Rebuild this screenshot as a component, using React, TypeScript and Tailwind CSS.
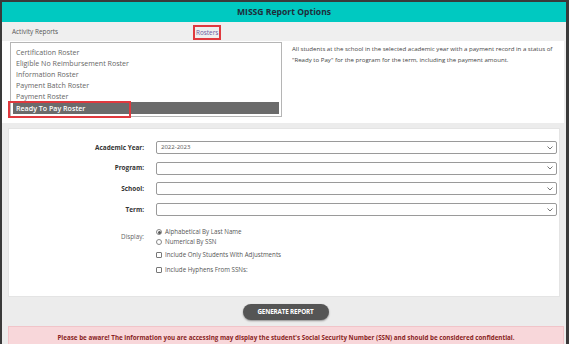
const rosters = [
  "Certification Roster",
  "Eligible No Reimbursement Roster",
  "Information Roster",
  "Payment Batch Roster",
  "Payment Roster",
  "Ready To Pay Roster",
];

const fields = [
  { label: "Academic Year:", value: "2022-2023" },
  { label: "Program:", value: "" },
  { label: "School:", value: "" },
  { label: "Term:", value: "" },
];

function Chevron() {
  return (
    <svg width="6" height="4" viewBox="0 0 6 4" className="shrink-0">
      <path d="M0.5 0.5 L3 3 L5.5 0.5" fill="none" stroke="#777" strokeWidth="1" />
    </svg>
  );
}

export default function App() {
  return (
    <div
      className="h-[344px] w-[569px] overflow-hidden border-l-2 border-r-[3px] border-t-2 border-[#3a3a3a] bg-[#ececec] text-[#555]"
      style={{ fontFamily: '"Open Sans", "Noto Sans", sans-serif' }}
    >
      {/* header */}
      <div className="flex h-[20px] items-center justify-center bg-[#00c9c1] text-[8.6px] font-bold text-[#1f2d3a]">
        MISSG Report Options
      </div>

      {/* tabs */}
      <div className="relative flex h-[19px] items-center bg-[#efefef] text-[6.4px] text-[#555]">
        <span className="pl-[10px]">Activity Reports</span>
        <span className="absolute left-[191px] top-[3px] border-2 border-[#e0393e] px-[1px] leading-[11px] text-[#6d5a9e]">
          Rosters
        </span>
      </div>

      {/* roster list + description */}
      <div className="mr-[2px] flex h-[82px] bg-white pl-[8px] pt-[1px]">
        <div className="relative h-[75px] w-[272px] border border-[#b5b5b5] pt-[4px] pl-[2px] pr-[2px]">
          {rosters.map((r, i) => (
            <div
              key={r}
              className={
                i === rosters.length - 1
                  ? "h-[12px] bg-[#6b6b6b] pl-[3px] text-[7.1px] font-semibold leading-[12px] text-white"
                  : "h-[11px] pl-[3px] text-[7.1px] leading-[11px] text-[#666]"
              }
            >
              {r}
            </div>
          ))}
          <div className="absolute left-[-3px] top-[58px] h-[17px] w-[123px] border-2 border-[#e0393e]" />
        </div>
        <p className="w-[282px] pl-[10px] pt-[1px] text-[6.1px] leading-[11px] text-[#444]">
          All students at the school in the selected academic year with a payment record in a status of
          "Ready to Pay" for the program for the term, including the payment amount.
        </p>
      </div>

      {/* form card */}
      <div className="mx-[6px] mt-[5px] h-[169px] border border-[#e4e4e4] bg-white pt-[12px]">
        {fields.map((f) => (
          <div key={f.label} className="mb-[7.7px] flex items-center">
            <div className="w-[135px] text-right text-[6.4px] font-bold text-[#333]">{f.label}</div>
            <div className="ml-[12px] flex h-[13px] w-[401px] items-center justify-between rounded-[2px] border border-[#9a9a9a] pl-[4px] pr-[3px] text-[6px] text-[#555]">
              <span>{f.value}</span>
              <Chevron />
            </div>
          </div>
        ))}

        <div className="mt-[11px] flex">
          <div className="w-[135px] pt-[5px] text-right text-[6.3px] text-[#666]">Display:</div>
          <div className="ml-[12px] text-[6.2px] text-[#555]">
            <div className="flex h-[10px] items-center gap-[3px]">
              <span className="flex h-[6px] w-[6px] items-center justify-center rounded-full border border-[#888]">
                <span className="h-[3px] w-[3px] rounded-full bg-[#555]" />
              </span>
              Alphabetical By Last Name
            </div>
            <div className="flex h-[10px] items-center gap-[3px]">
              <span className="h-[6px] w-[6px] rounded-full border border-[#888]" />
              Numerical By SSN
            </div>
            <div className="mt-[3px] flex h-[10px] items-center gap-[3px]">
              <span className="h-[6px] w-[6px] rounded-[1px] border border-[#777]" />
              Include Only Students With Adjustments
            </div>
            <div className="mt-[5px] flex h-[10px] items-center gap-[3px]">
              <span className="h-[6px] w-[6px] rounded-[1px] border border-[#777]" />
              Include Hyphens From SSNs:
            </div>
          </div>
        </div>
      </div>

      {/* button */}
      <div className="flex h-[29px] items-center justify-center">
        <button
          type="button"
          className="ml-[3px] h-[16px] w-[86px] rounded-full bg-[#555] text-[6.3px] font-bold tracking-tight text-white shadow-[0_1px_2px_rgba(0,0,0,0.4)]"
        >
          GENERATE REPORT
        </button>
      </div>

      {/* warning banner */}
      <div className="mx-[6px] mr-[2px] flex h-[20px] items-start justify-center border border-[#f1c4c9] bg-[#f8d7da] pt-[6px] text-[6.25px] font-bold text-[#8a1f24]">
        Please be aware! The information you are accessing may display the student's Social Security Number (SSN) and should be considered confidential.
      </div>
    </div>
  );
}
